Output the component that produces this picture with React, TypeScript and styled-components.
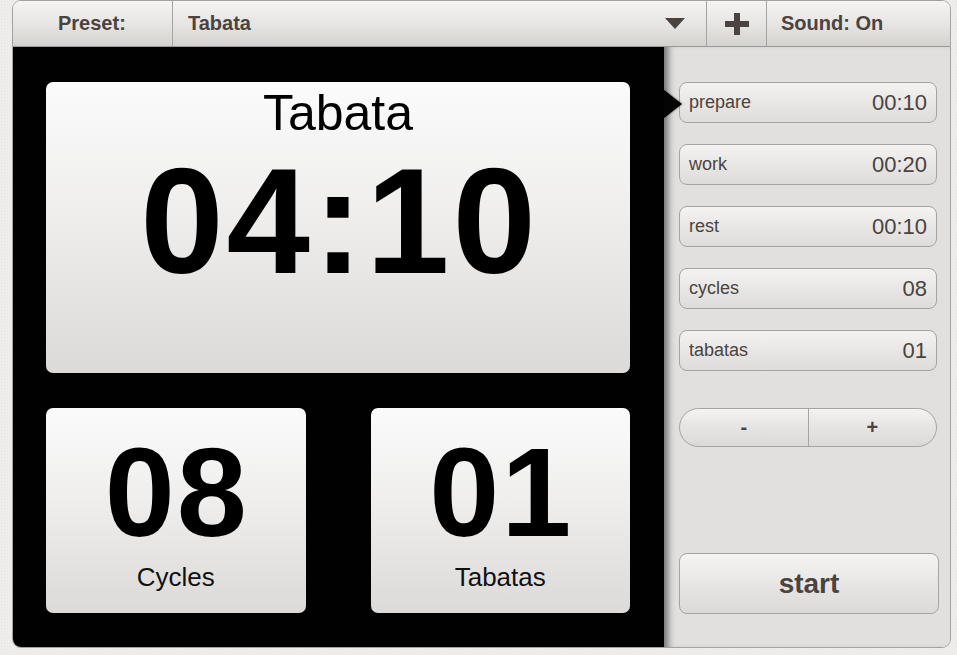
import React from 'react';
import styled, { createGlobalStyle } from 'styled-components';

const ink = '#4a4340';
const line = '#a6a4a2';

const GlobalStyle = createGlobalStyle`
  html, body {
    margin: 0;
    padding: 0;
    background: #eeedeb;
    font-family: 'Liberation Sans', Arial, sans-serif;
  }
`;

const Page = styled.div`
  width: 957px;
  height: 655px;
  padding-left: 12px;
  box-sizing: border-box;
  background-color: #eeedeb;
  background-image: radial-gradient(rgba(0, 0, 0, 0.035) 1px, transparent 1px);
  background-size: 3px 3px;
`;

const Frame = styled.div`
  width: 939px;
  height: 648px;
  box-sizing: border-box;
  border: 1px solid #a2a2a2;
  border-radius: 9px;
  overflow: hidden;
  display: flex;
  flex-direction: column;
`;

const Header = styled.div`
  height: 46px;
  flex: none;
  box-sizing: border-box;
  display: flex;
  border-bottom: 1px solid #9c9a98;
  background: linear-gradient(#f5f4f3, #e6e4e2 55%, #d4d1ce);
  color: ${ink};
  font-size: 20px;
  font-weight: bold;
`;

const HeaderCell = styled.div<{ $width?: number; $pad?: number; $center?: boolean }>`
  ${p => (p.$width ? `width: ${p.$width}px; flex: none;` : 'flex: 1;')}
  box-sizing: border-box;
  display: flex;
  align-items: center;
  justify-content: ${p => (p.$center ? 'center' : 'space-between')};
  padding-left: ${p => p.$pad ?? 0}px;
  & + & {
    border-left: 1px solid ${line};
  }
`;

const Caret = styled.span`
  width: 0;
  height: 0;
  margin-right: 21px;
  border-left: 10px solid transparent;
  border-right: 10px solid transparent;
  border-top: 11px solid ${ink};
`;

const Body = styled.div`
  flex: 1;
  display: flex;
  min-height: 0;
`;

const Stage = styled.div`
  width: 651px;
  flex: none;
  box-sizing: border-box;
  background: #020101;
  padding: 35px 34px 34px 33px;
  display: grid;
  grid-template-columns: 1fr 1fr;
  grid-template-rows: 291px 205px;
  gap: 35px 65px;
`;

const Card = styled.div<{ $wide?: boolean }>`
  grid-column: ${p => (p.$wide ? '1 / span 2' : 'auto')};
  border-radius: 7px;
  background: linear-gradient(#fbfbfb, #efeeed 45%, #dcdad8);
  display: flex;
  flex-direction: column;
  align-items: center;
  color: #000;
  padding-top: ${p => (p.$wide ? 6 : 22)}px;
  box-sizing: border-box;
`;

const Title = styled.div`
  font-size: 50px;
  line-height: 1;
`;

const Clock = styled.div`
  font-size: 150px;
  line-height: 1;
  font-weight: bold;
  letter-spacing: 3px;
  padding-left: 3px;
  margin-top: 8px;
`;

const Count = styled.div`
  font-size: 126px;
  line-height: 1;
  font-weight: bold;
  letter-spacing: 2px;
  padding-left: 2px;
`;

const CountLabel = styled.div`
  font-size: 26px;
  line-height: 1;
  margin-top: 8px;
  color: #111;
`;

const Sidebar = styled.div`
  flex: 1;
  position: relative;
  background: #e2e0de;
  box-shadow: inset 9px 0 7px -5px rgba(0, 0, 0, 0.5);
  padding: 35px 13px 33px 15px;
  display: flex;
  flex-direction: column;
`;

const Pointer = styled.span`
  position: absolute;
  left: 0;
  top: 43px;
  width: 0;
  height: 0;
  border-top: 14px solid transparent;
  border-bottom: 14px solid transparent;
  border-left: 18px solid #050404;
  filter: drop-shadow(0 0 1px rgba(0, 0, 0, 0.6));
  z-index: 1;
`;

const Rows = styled.div`
  display: flex;
  flex-direction: column;
  gap: 21px;
`;

const Row = styled.div`
  height: 41px;
  box-sizing: border-box;
  border: 1px solid ${line};
  border-radius: 8px;
  background: linear-gradient(#f4f3f2, #e9e7e5 50%, #dedcda);
  display: flex;
  align-items: center;
  justify-content: space-between;
  padding: 0 9px 0 9px;
  color: ${ink};
`;

const RowLabel = styled.span`
  font-size: 18px;
`;

const RowValue = styled.span`
  font-size: 22px;
`;

const Stepper = styled.div`
  margin-top: 37px;
  height: 39px;
  box-sizing: border-box;
  border: 1px solid ${line};
  border-radius: 20px;
  overflow: hidden;
  display: flex;
  background: linear-gradient(#f4f3f2, #e6e4e2 50%, #dcdad8);
`;

const StepButton = styled.div`
  flex: 1;
  display: flex;
  align-items: center;
  justify-content: center;
  font-size: 20px;
  font-weight: bold;
  color: ${ink};
  & + & {
    border-left: 1px solid ${line};
  }
`;

const Start = styled.div`
  margin-top: auto;
  margin-right: -2px;
  height: 61px;
  box-sizing: border-box;
  border: 1px solid ${line};
  border-radius: 8px;
  background: linear-gradient(#f5f4f3, #e8e6e4 50%, #dcdad8);
  display: flex;
  align-items: center;
  justify-content: center;
  font-size: 28px;
  font-weight: bold;
  color: ${ink};
`;

const PlusIcon = () => (
  <svg width="24" height="22" viewBox="0 0 24 22">
    <rect x="0" y="8" width="24" height="6" fill={ink} />
    <rect x="9" y="0" width="6" height="22" fill={ink} />
  </svg>
);

const intervals = [
  { label: 'prepare', value: '00:10' },
  { label: 'work', value: '00:20' },
  { label: 'rest', value: '00:10' },
  { label: 'cycles', value: '08' },
  { label: 'tabatas', value: '01' },
];

const App: React.FC = () => {
  return (
    <Page>
      <GlobalStyle />
      <Frame>
        <Header>
          <HeaderCell $width={159} $pad={45}>
            Preset:
          </HeaderCell>
          <HeaderCell $width={534} $pad={15}>
            <span>Tabata</span>
            <Caret />
          </HeaderCell>
          <HeaderCell $width={60} $center>
            <PlusIcon />
          </HeaderCell>
          <HeaderCell $pad={14}>Sound: On</HeaderCell>
        </Header>
        <Body>
          <Stage>
            <Card $wide>
              <Title>Tabata</Title>
              <Clock>04:10</Clock>
            </Card>
            <Card>
              <Count>08</Count>
              <CountLabel>Cycles</CountLabel>
            </Card>
            <Card>
              <Count>01</Count>
              <CountLabel>Tabatas</CountLabel>
            </Card>
          </Stage>
          <Sidebar>
            <Pointer />
            <Rows>
              {intervals.map(item => (
                <Row key={item.label}>
                  <RowLabel>{item.label}</RowLabel>
                  <RowValue>{item.value}</RowValue>
                </Row>
              ))}
            </Rows>
            <Stepper>
              <StepButton>-</StepButton>
              <StepButton>+</StepButton>
            </Stepper>
            <Start>start</Start>
          </Sidebar>
        </Body>
      </Frame>
    </Page>
  );
};

export default App;
